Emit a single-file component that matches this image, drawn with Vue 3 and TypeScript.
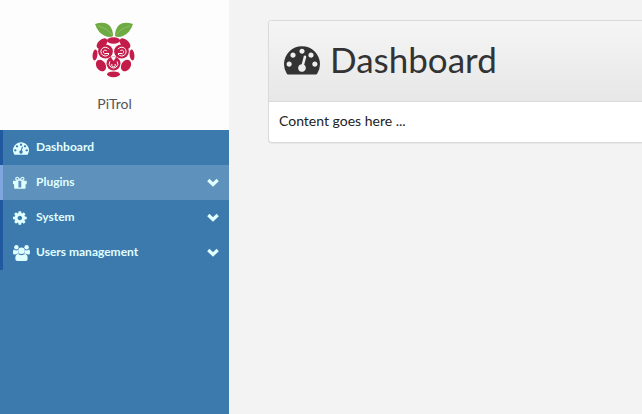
<script setup lang="ts">
interface MenuItem {
  label: string
  icon: string
  expandable: boolean
  active: boolean
}

const items: MenuItem[] = [
  { label: 'Dashboard', icon: 'gauge', expandable: false, active: false },
  { label: 'Plugins', icon: 'gift', expandable: true, active: true },
  { label: 'System', icon: 'cog', expandable: true, active: false },
  { label: 'Users management', icon: 'users', expandable: true, active: false },
]

const gauge =
  'M384 1152q0-53-37.5-90.5t-90.5-37.5-90.5 37.5-37.5 90.5 37.5 90.5 90.5 37.5 90.5-37.5 37.5-90.5zm192-448q0-53-37.5-90.5t-90.5-37.5-90.5 37.5-37.5 90.5 37.5 90.5 90.5 37.5 90.5-37.5 37.5-90.5zm428 481l101-382q6-26-7.5-48.5t-38.5-29.5-48 6.5-30 39.5l-101 382q-60 5-107 43.5t-63 98.5q-20 77 20 146t117 89 146-20 89-117q16-60-6-117t-72-91zm660-33q0-53-37.5-90.5t-90.5-37.5-90.5 37.5-37.5 90.5 37.5 90.5 90.5 37.5 90.5-37.5 37.5-90.5zm-640-640q0-53-37.5-90.5t-90.5-37.5-90.5 37.5-37.5 90.5 37.5 90.5 90.5 37.5 90.5-37.5 37.5-90.5zm448 192q0-53-37.5-90.5t-90.5-37.5-90.5 37.5-37.5 90.5 37.5 90.5 90.5 37.5 90.5-37.5 37.5-90.5zm320 448q0 261-141 483-19 29-54 29h-1402q-35 0-54-29-141-221-141-483 0-182 71-348t191-286 286-191 348-71 348 71 286 191 191 286 71 348z'
const gift =
  'M1056 1356v-716h-320v716q0 25 18 38.5t46 13.5h192q28 0 46-13.5t18-38.5zm-456-844h195l-126-161q-26-31-69-31-40 0-68 28t-28 68 28 68 68 28zm688-96q0-40-28-68t-68-28q-43 0-69 31l-125 161h194q40 0 68-28t28-68zm376 256v320q0 14-9 23t-23 9h-96v416q0 40-28 68t-68 28h-1088q-40 0-68-28t-28-68v-416h-96q-14 0-23-9t-9-23v-320q0-14 9-23t23-9h440q-93 0-158.5-65.5t-65.5-158.5 65.5-158.5 158.5-65.5q107 0 168 77l128 165 128-165q61-77 168-77 93 0 158.5 65.5t65.5 158.5-65.5 158.5-158.5 65.5h440q14 0 23 9t9 23z'
const cog =
  'M1152 896q0-106-75-181t-181-75-181 75-75 181 75 181 181 75 181-75 75-181zm512-109v222q0 12-8 23t-20 13l-185 28q-19 54-39 91 35 50 107 138 10 12 10 25t-9 23q-27 37-99 108t-94 71q-12 0-26-9l-138-108q-44 23-91 38-16 136-29 186-7 28-36 28h-222q-14 0-24.5-8.5t-11.5-21.5l-28-184q-49-16-90-37l-141 107q-10 9-25 9-14 0-25-11-126-114-165-168-7-10-7-23 0-12 8-23 15-21 51-66.5t54-70.5q-27-50-41-99l-183-27q-13-2-21-12.5t-8-23.5v-222q0-12 8-23t19-13l186-28q14-46 39-92-40-57-107-138-10-12-10-24 0-10 9-23 26-36 98.5-107.5t94.5-71.5q13 0 26 10l138 107q44-23 91-38 16-136 29-186 7-28 36-28h222q14 0 24.5 8.5t11.5 21.5l28 184q49 16 90 37l142-107q9-9 24-9 13 0 25 10 129 119 165 170 7 8 7 22 0 12-8 23-15 21-51 66.5t-54 70.5q26 50 41 98l183 28q13 2 21 12.5t8 23.5z'
</script>

<template>
  <div class="layout">
    <aside class="sidebar">
      <header class="brand">
        <svg class="logo" viewBox="12 8 45 56" aria-hidden="true">
          <g fill="#6fab43">
            <path d="M33 22Q30 24 25 22Q18 19 15 10Q24 7 29 11Q33 15 33 22Z" />
            <path d="M35 22Q38 24 43 22Q50 19 53 10Q44 7 39 11Q35 15 35 22Z" />
          </g>
          <path d="M18 12Q27 14 32 21M50 12Q41 14 36 21" fill="none" stroke="#93c06d" stroke-width=".8" />
          <g fill="#c31c4a">
            <ellipse cx="33.5" cy="26.5" rx="6.6" ry="3.3" />
            <ellipse cx="22" cy="29.5" rx="6.4" ry="3.8" transform="rotate(-42 22 29.5)" />
            <ellipse cx="45" cy="29.5" rx="6.4" ry="3.8" transform="rotate(42 45 29.5)" />
            <ellipse cx="15" cy="41" rx="2.4" ry="5.6" transform="rotate(6 15 41)" />
            <ellipse cx="52" cy="41" rx="2.4" ry="5.6" transform="rotate(-6 52 41)" />
            <ellipse cx="21" cy="51.5" rx="4.6" ry="6.2" transform="rotate(-32 21 51.5)" />
            <ellipse cx="46" cy="51.5" rx="4.6" ry="6.2" transform="rotate(32 46 51.5)" />
            <ellipse cx="33.5" cy="60.3" rx="6.5" ry="2.9" />
            <ellipse cx="25.5" cy="37.5" rx="7.4" ry="7" />
            <ellipse cx="41.5" cy="37.5" rx="7.4" ry="7" />
            <circle cx="33.5" cy="49.5" r="7" />
          </g>
          <g fill="none" stroke="#fff" stroke-width="1">
            <path d="M29 35.2A4.4 4.4 0 1 0 29 40M38 35.2A4.4 4.4 0 1 1 38 40" />
            <path d="M26.8 37.2A1.8 1.8 0 1 0 26 39.5H29M40.2 37.2A1.8 1.8 0 1 1 41 39.5H38" />
            <path d="M29.8 47.5A4.3 4.3 0 1 0 37.2 47.5M32 50A1.8 1.8 0 1 0 35 50" />
          </g>
          <path d="M31 43.5Q33.5 42 36 43.5L33.5 47Z" fill="#fff" />
        </svg>
        <span>PiTrol</span>
      </header>
      <nav>
        <a v-for="item in items" :key="item.label" href="#" class="item" :class="{ active: item.active }">
          <span class="icon">
            <svg v-if="item.icon === 'gauge'" viewBox="0 0 1792 1792" aria-hidden="true"><path :d="gauge" /></svg>
            <svg v-else-if="item.icon === 'gift'" viewBox="128 0 1792 1792" aria-hidden="true"><path :d="gift" /></svg>
            <svg v-else-if="item.icon === 'cog'" viewBox="128 0 1792 1792" aria-hidden="true"><path :d="cog" /></svg>
            <svg v-else class="wide" viewBox="0 0 17 16" aria-hidden="true">
              <circle cx="3.4" cy="2.3" r="2.2" />
              <circle cx="13.6" cy="2.3" r="2.2" />
              <path d="M1 4.4Q3.4 6.2 5 5Q4.7 7.6 6 8.8H4Q3 8.8 2.3 9.6H1.5Q0 9.6 0 8Q0 4.4 1 4.4Z" />
              <path d="M16 4.4Q13.6 6.2 12 5Q12.3 7.6 11 8.8H13Q14 8.8 14.7 9.6H15.5Q17 9.6 17 8Q17 4.4 16 4.4Z" />
              <circle cx="8.5" cy="5.8" r="3.3" />
              <path d="M5 9.1Q8.5 11.4 12 9.1Q14.7 9.3 14.7 13.8Q14.7 16 12.5 16H4.5Q2.3 16 2.3 13.8Q2.3 9.3 5 9.1Z" />
            </svg>
          </span>
          <span class="label">{{ item.label }}</span>
          <svg v-if="item.expandable" class="chevron" viewBox="0 0 12 9" aria-hidden="true">
            <path d="M1.3 2L6 6.5L10.7 2" fill="none" stroke="currentColor" stroke-width="3.2" />
          </svg>
        </a>
      </nav>
    </aside>
    <main class="content">
      <section class="panel">
        <h1>
          <svg viewBox="0 0 1792 1792" aria-hidden="true"><path :d="gauge" /></svg>
          <span>Dashboard</span>
        </h1>
        <p>Content goes here ...</p>
      </section>
    </main>
  </div>
</template>

<style>
body {
  margin: 0;
  background: #f3f3f3;
}
</style>

<style scoped>
.layout {
  display: flex;
  min-height: 100vh;
  font-family: Lato, "Open Sans", sans-serif;
  color: #222;
}
.sidebar {
  flex: 0 0 229px;
  background: #3c7aae;
}
.brand {
  display: flex;
  flex-direction: column;
  align-items: center;
  gap: 16px;
  height: 108px;
  padding-top: 22px;
  background: #fdfdfd;
  color: #555;
  font-size: 14px;
  line-height: 20px;
}
.logo {
  width: 45px;
  height: 56px;
}
.item {
  display: flex;
  align-items: center;
  height: 35px;
  box-sizing: border-box;
  padding: 0 10px;
  border-left: 3px solid #2159a1;
  color: #e0ffff;
  font-size: 12px;
  font-weight: 700;
  text-decoration: none;
}
.item.active {
  background: #5e91bb;
  border-left-color: #7ea6df;
}
.icon {
  display: flex;
  width: 23px;
}
svg {
  fill: currentColor;
}
.icon svg {
  width: 16px;
  height: 16px;
}
.icon .wide {
  width: 17px;
}
.label {
  flex: 1;
  padding-bottom: 2px;
}
.chevron {
  width: 12px;
  height: 9px;
}
.content {
  flex: 1;
  padding: 20px 0 20px 39px;
}
.panel {
  border: 1px solid #dadada;
  border-right: 0;
  border-radius: 4px 0 0 4px;
  background: #fff;
  box-shadow: 0 1px 1px #0000000d;
  overflow: hidden;
}
h1 {
  display: flex;
  align-items: center;
  gap: 10px;
  margin: 0;
  padding: 18px 15px 22px;
  border-bottom: 1px solid #dadada;
  background: linear-gradient(#f5f5f5, #e7e7e7);
  color: #333;
  font-size: 35px;
  font-weight: 400;
  line-height: 40px;
}
h1 svg {
  width: 36px;
  height: 36px;
}
p {
  margin: 0;
  padding: 9px 10px 11px;
  font-size: 14px;
  line-height: 20px;
}
</style>
